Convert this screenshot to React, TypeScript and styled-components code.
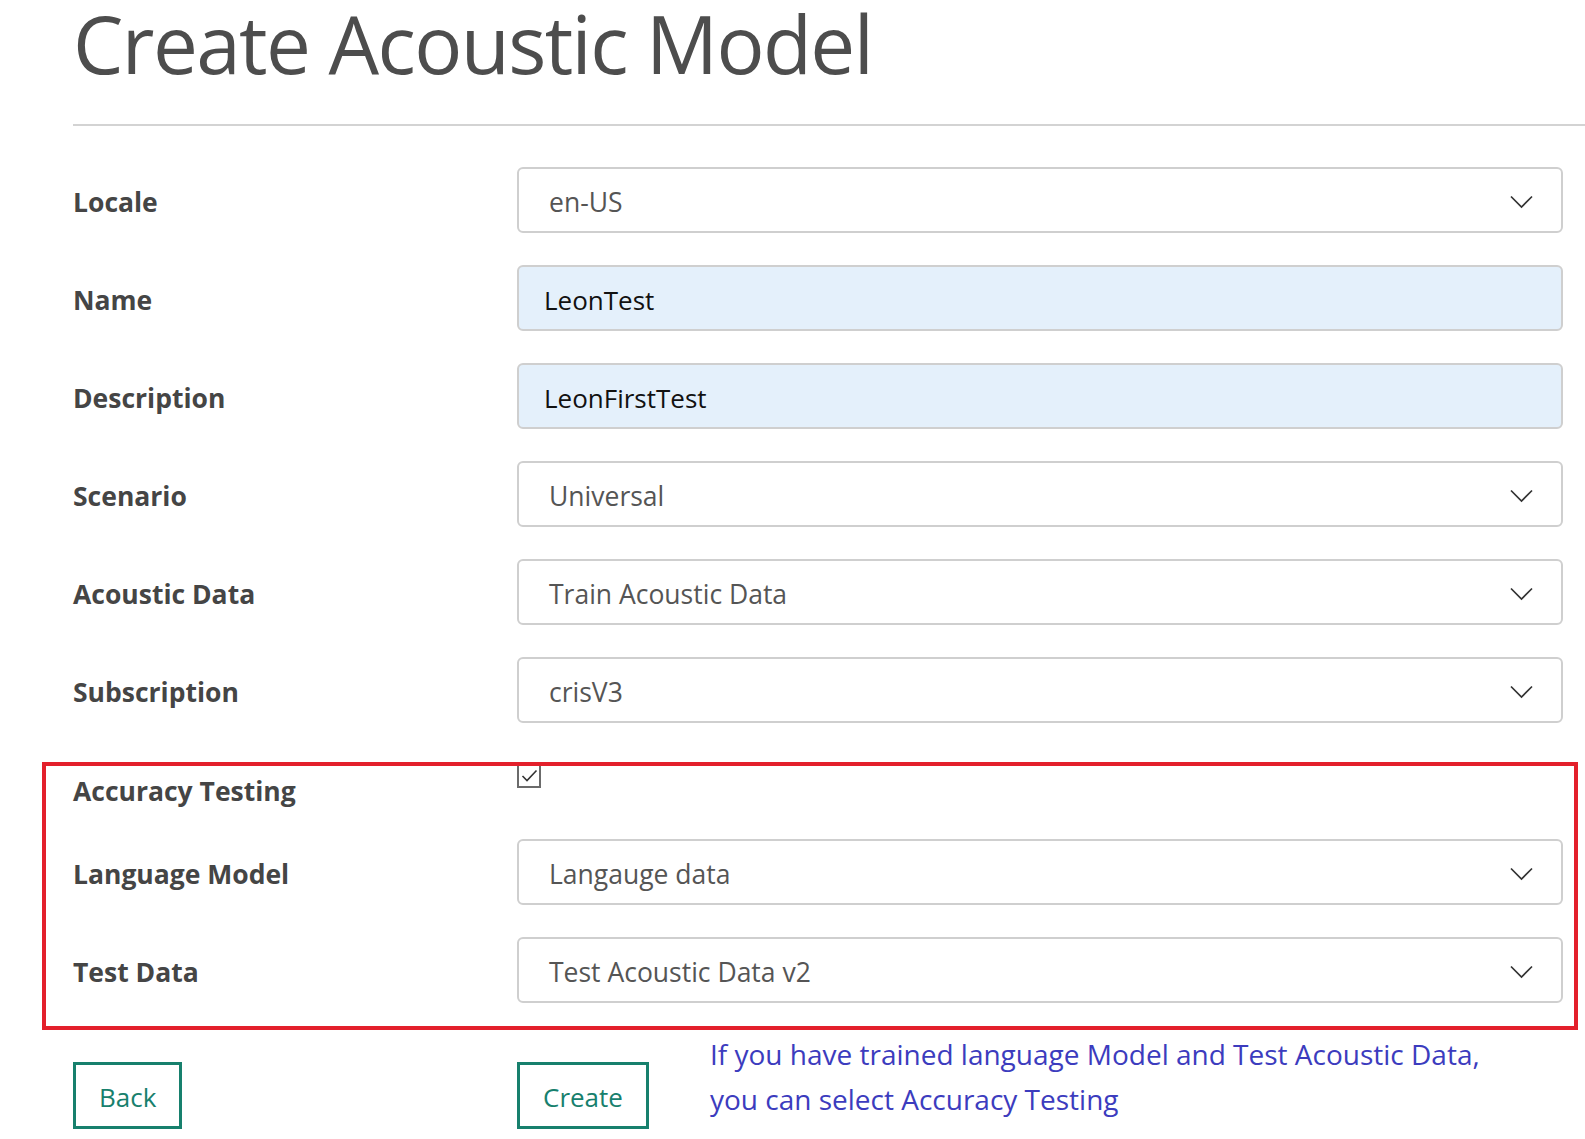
import React from 'react';
import styled, { createGlobalStyle } from 'styled-components';

const GlobalStyle = createGlobalStyle`
  html, body { margin: 0; padding: 0; background: #ffffff; }
  body { font-family: "Open Sans", "Noto Sans", sans-serif; }
`;

const Page = styled.div`
  width: 1585px;
  padding-left: 73px;
  box-sizing: border-box;
`;

const Title = styled.h1`
  margin: 0;
  font-size: 80px;
  line-height: 86px;
  font-weight: 400;
  letter-spacing: -1.6px;
  color: #4d4d4d;
  white-space: nowrap;
`;

const Divider = styled.hr`
  margin: 38px 0 0;
  border: 0;
  height: 2px;
  background: #d3d3d3;
`;

const Form = styled.div`
  padding: 41px 22px 0 0;
`;

const Row = styled.div<{ $top?: number }>`
  display: grid;
  grid-template-columns: 444px 1fr;
  align-items: center;
  margin-top: ${(p) => p.$top ?? 0}px;
`;

const Label = styled.div`
  padding-top: 3px;
  font-size: 26.5px;
  line-height: 36px;
  font-weight: 700;
  color: #454545;
`;

const Field = styled.div<{ $filled?: boolean }>`
  height: 66px;
  box-sizing: border-box;
  border: 2px solid #cfcfcf;
  border-radius: 6px;
  display: flex;
  align-items: center;
  justify-content: space-between;
  padding: ${(p) => (p.$filled ? '3px 28px 0 25px' : '3px 28px 0 30px')};
  background: ${(p) => (p.$filled ? '#e4f0fb' : '#ffffff')};
  color: ${(p) => (p.$filled ? '#111111' : '#555555')};
  font-size: ${(p) => (p.$filled ? '26px' : '26.5px')};
`;

const Highlight = styled.section`
  position: relative;
  margin: 39px 7px 0 -31px;
  padding: 5px 15px 27px 31px;
  &::after {
    content: '';
    position: absolute;
    inset: 0;
    border: 4px solid #e3202b;
    pointer-events: none;
  }
`;

const CheckRow = styled.div`
  display: grid;
  grid-template-columns: 444px 1fr;
  align-items: start;
  height: 72px;
`;

const CheckLabel = styled(Label)`
  padding-top: 6px;
`;

const CheckBox = styled.span`
  width: 24px;
  height: 24px;
  margin-top: -3px;
  box-sizing: border-box;
  border: 2px solid #6b6b6b;
  display: flex;
  align-items: center;
  justify-content: center;
`;

const Actions = styled.div`
  display: grid;
  grid-template-columns: 444px 1fr;
  align-items: start;
  padding-right: 22px;
`;

const ActionCell = styled.div`
  display: flex;
  align-items: flex-start;
`;

const Button = styled.button`
  margin-top: 32px;
  height: 67px;
  box-sizing: border-box;
  padding: 2px 23px 0;
  border: 3px solid #17806d;
  background: #ffffff;
  color: #17806d;
  font-family: "Open Sans", "Noto Sans", sans-serif;
  font-size: 26px;
  cursor: pointer;
  justify-self: start;
`;

const Help = styled.p`
  margin: 2px 0 0 61px;
  font-size: 28px;
  line-height: 45px;
  color: #3c3cbe;
  white-space: nowrap;
`;

const Chevron = () => (
  <svg width="23" height="14" viewBox="0 0 23 14" fill="none">
    <polyline points="1,1.5 11.5,12 22,1.5" stroke="#333333" strokeWidth="1.7" />
  </svg>
);

const Check = () => (
  <svg width="17" height="14" viewBox="0 0 17 14" fill="none">
    <polyline points="1.5,7 6,11.5 15.5,1.5" stroke="#333333" strokeWidth="1.6" />
  </svg>
);

const SelectField = ({ value }: { value: string }) => (
  <Field>
    <span>{value}</span>
    <Chevron />
  </Field>
);

export default function App() {
  return (
    <>
      <GlobalStyle />
      <Page>
        <Title>Create Acoustic Model</Title>
        <Divider />
        <Form>
          <Row>
            <Label>Locale</Label>
            <SelectField value="en-US" />
          </Row>
          <Row $top={32}>
            <Label>Name</Label>
            <Field $filled>LeonTest</Field>
          </Row>
          <Row $top={32}>
            <Label>Description</Label>
            <Field $filled>LeonFirstTest</Field>
          </Row>
          <Row $top={32}>
            <Label>Scenario</Label>
            <SelectField value="Universal" />
          </Row>
          <Row $top={32}>
            <Label>Acoustic Data</Label>
            <SelectField value="Train Acoustic Data" />
          </Row>
          <Row $top={32}>
            <Label>Subscription</Label>
            <SelectField value="crisV3" />
          </Row>
        </Form>
        <Highlight>
          <CheckRow>
            <CheckLabel>Accuracy Testing</CheckLabel>
            <CheckBox>
              <Check />
            </CheckBox>
          </CheckRow>
          <Row>
            <Label>Language Model</Label>
            <SelectField value="Langauge data" />
          </Row>
          <Row $top={32}>
            <Label>Test Data</Label>
            <SelectField value="Test Acoustic Data v2" />
          </Row>
        </Highlight>
        <Actions>
          <Button>Back</Button>
          <ActionCell>
            <Button>Create</Button>
            <Help>
              If you have trained language Model and Test Acoustic Data,
              <br />
              you can select Accuracy Testing
            </Help>
          </ActionCell>
        </Actions>
      </Page>
    </>
  );
}
